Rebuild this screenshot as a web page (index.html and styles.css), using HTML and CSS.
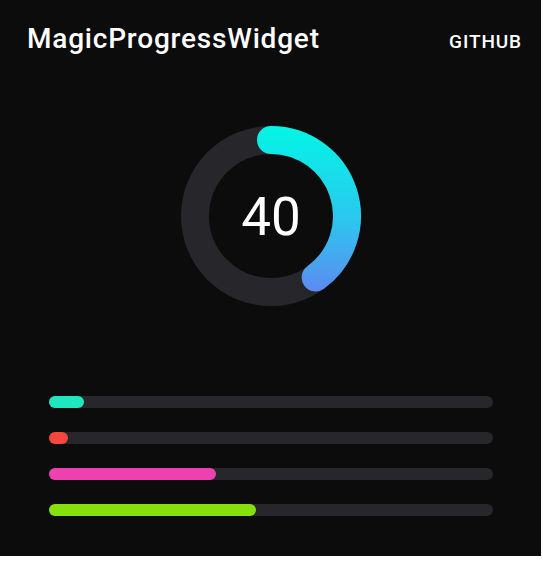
FILE: index.html
```html
<!DOCTYPE html>
<html>
<head>
<meta charset="utf-8">
<link rel="stylesheet" href="styles.css">
</head>
<body>
<div class="screen">
  <header class="bar">
    <h1 class="title">MagicProgressWidget</h1>
    <span class="link">GITHUB</span>
  </header>
  <section class="ring-wrap">
    <div class="ring">
      <svg width="182" height="182" viewBox="0 0 182 182">
        <defs>
          <linearGradient id="g" gradientUnits="userSpaceOnUse" x1="0" y1="2" x2="0" y2="166">
            <stop offset="0" stop-color="#02F5E4"/>
            <stop offset="0.55" stop-color="#2BC8EE"/>
            <stop offset="1" stop-color="#5C8BF1"/>
          </linearGradient>
        </defs>
        <circle cx="91" cy="91" r="76" fill="none" stroke="#27272B" stroke-width="28"/>
        <path d="M91 15 A76 76 0 0 1 135.67 152.48" fill="none" stroke="url(#g)" stroke-width="28" stroke-linecap="round"/>
      </svg>
      <span class="value">40</span>
    </div>
  </section>
  <section class="bars">
    <div class="track"><div class="fill teal" style="width:35px"></div></div>
    <div class="track"><div class="fill red" style="width:19px"></div></div>
    <div class="track"><div class="fill pink" style="width:167px"></div></div>
    <div class="track"><div class="fill lime" style="width:207px"></div></div>
  </section>
</div>
</body>
</html>
```
FILE: styles.css
```css
html, body {
  margin: 0;
  padding: 0;
  background: #ffffff;
}
.screen {
  width: 541px;
  height: 556px;
  background: #0C0C0C;
  font-family: Roboto, "Liberation Sans", sans-serif;
  color: #ffffff;
  overflow: hidden;
}
.bar {
  display: flex;
  align-items: baseline;
  justify-content: space-between;
  padding: 23px 19px 0 27px;
  height: 62px;
  box-sizing: border-box;
}
.title {
  margin: 0;
  font-size: 28px;
  font-weight: 500;
  letter-spacing: 0.8px;
  line-height: 32px;
}
.link {
  font-size: 19px;
  font-weight: 500;
  letter-spacing: 0.9px;
  line-height: 32px;
}
.ring-wrap {
  display: flex;
  justify-content: center;
  padding: 63px 0 0 0;
}
.ring {
  position: relative;
  width: 182px;
  height: 182px;
  margin-left: 1px;
}
.ring svg {
  display: block;
}
.value {
  position: absolute;
  inset: 0;
  display: flex;
  align-items: center;
  justify-content: center;
  font-size: 53px;
  font-weight: 400;
  padding-top: 2px;
}
.bars {
  display: flex;
  flex-direction: column;
  gap: 24px;
  padding: 89px 0 0 49px;
}
.track {
  width: 444px;
  height: 12px;
  border-radius: 6px;
  background: #27272B;
}
.fill {
  height: 12px;
  border-radius: 6px;
}
.teal { background: #1FE6BE; }
.red { background: #F5473D; }
.pink { background: #EE41B0; }
.lime { background: #86E00C; }
```
